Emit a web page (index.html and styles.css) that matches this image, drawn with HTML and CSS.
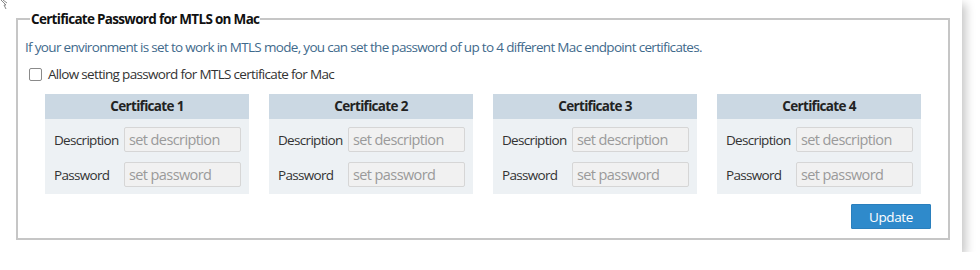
FILE: index.html
```html
<!DOCTYPE html>
<html>
<head>
<meta charset="utf-8">
<link rel="stylesheet" href="styles.css">
</head>
<body>
<div class="card">
  <svg class="cursor" width="12" height="10" viewBox="0 0 12 10"><path d="M1 0 L6 5 L4 5 L6 9 M3 0 L7 3" fill="none" stroke="#888" stroke-width="1"/></svg>
  <fieldset class="group">
    <legend class="group-title">Certificate Password for MTLS on Mac</legend>
    <p class="intro">If your environment is set to work in MTLS mode, you can set the password of up to 4 different Mac endpoint certificates.</p>
    <label class="check-row"><input type="checkbox" class="check"><span>Allow setting password for MTLS certificate for Mac</span></label>
    <div class="certs">
      <div class="cert">
        <div class="cert-head">Certificate 1</div>
        <div class="cert-body">
          <div class="row"><span class="lbl">Description</span><input class="field" placeholder="set description"></div>
          <div class="row"><span class="lbl">Password</span><input class="field" placeholder="set password"></div>
        </div>
      </div>
      <div class="cert">
        <div class="cert-head">Certificate 2</div>
        <div class="cert-body">
          <div class="row"><span class="lbl">Description</span><input class="field" placeholder="set description"></div>
          <div class="row"><span class="lbl">Password</span><input class="field" placeholder="set password"></div>
        </div>
      </div>
      <div class="cert">
        <div class="cert-head">Certificate 3</div>
        <div class="cert-body">
          <div class="row"><span class="lbl">Description</span><input class="field" placeholder="set description"></div>
          <div class="row"><span class="lbl">Password</span><input class="field" placeholder="set password"></div>
        </div>
      </div>
      <div class="cert">
        <div class="cert-head">Certificate 4</div>
        <div class="cert-body">
          <div class="row"><span class="lbl">Description</span><input class="field" placeholder="set description"></div>
          <div class="row"><span class="lbl">Password</span><input class="field" placeholder="set password"></div>
        </div>
      </div>
    </div>
    <div class="actions"><button class="btn">Update</button></div>
  </fieldset>
</div>
</body>
</html>
```
FILE: styles.css
```css
html, body { margin: 0; padding: 0; background: #fff; }
body { font-family: "Open Sans", "DejaVu Sans", sans-serif; font-size: 13.5px; letter-spacing: -0.68px; color: #333; }
.card {
  position: relative;
  width: 962px; height: 252px;
  background: #fff;
  box-shadow: 4px 4px 9px rgba(0,0,0,0.22);
  box-sizing: border-box;
  padding-top: 10px;
}
.cursor { position: absolute; left: 0; top: 0; }
.group {
  box-sizing: border-box;
  width: 934px; height: 230px;
  margin: 0 0 0 16px;
  padding: 0 0 8px 7px;
  border: 2px solid #c6c6c6;
  min-width: 0;
}
.group-title {
  font-weight: 700; font-size: 13.5px; line-height: 18px; letter-spacing: -0.7px;
  color: #111; padding: 0 1px; margin-left: 5px;
}
.intro { margin: 10px 0 0; line-height: 18px; color: #3f6a8c; }
.check-row { display: flex; align-items: center; margin-top: 9px; line-height: 18px; color: #333; }
.check {
  appearance: none; -webkit-appearance: none;
  width: 13px; height: 13px; margin: 0 6px 0 4px;
  border: 1px solid #8a8a8a; border-radius: 2px; background: #fff; box-sizing: border-box;
}
.certs { display: flex; gap: 20px; margin: 11px 0 0 20px; }
.cert { width: 204px; background: #edf1f4; }
.cert-head { height: 25px; line-height: 25px; background: #cbd8e3; text-align: center; font-weight: 700; color: #222; }
.cert-body { padding: 8px 8px 7px 9px; display: flex; flex-direction: column; gap: 10px; }
.row { display: flex; align-items: center; }
.lbl { width: 70px; flex: none; color: #333; }
.field {
  box-sizing: border-box; width: 117px; height: 25px;
  border: 1px solid #d6d6d6; border-radius: 2px; background: #f1f1f1;
  font-family: inherit; font-size: 14.5px; letter-spacing: -0.6px; color: #555; padding: 0 4px; outline: none;
}
.field::placeholder { color: #9a9a9a; }
.actions { display: flex; justify-content: flex-end; margin-top: 10px; padding-right: 17px; }
.btn {
  width: 80px; height: 25px; border: 1px solid #2a7fbd; background: #2f8acb; color: #fff;
  font-family: inherit; font-size: 13.5px; letter-spacing: -0.4px; border-radius: 1px; padding: 0;
}
```
